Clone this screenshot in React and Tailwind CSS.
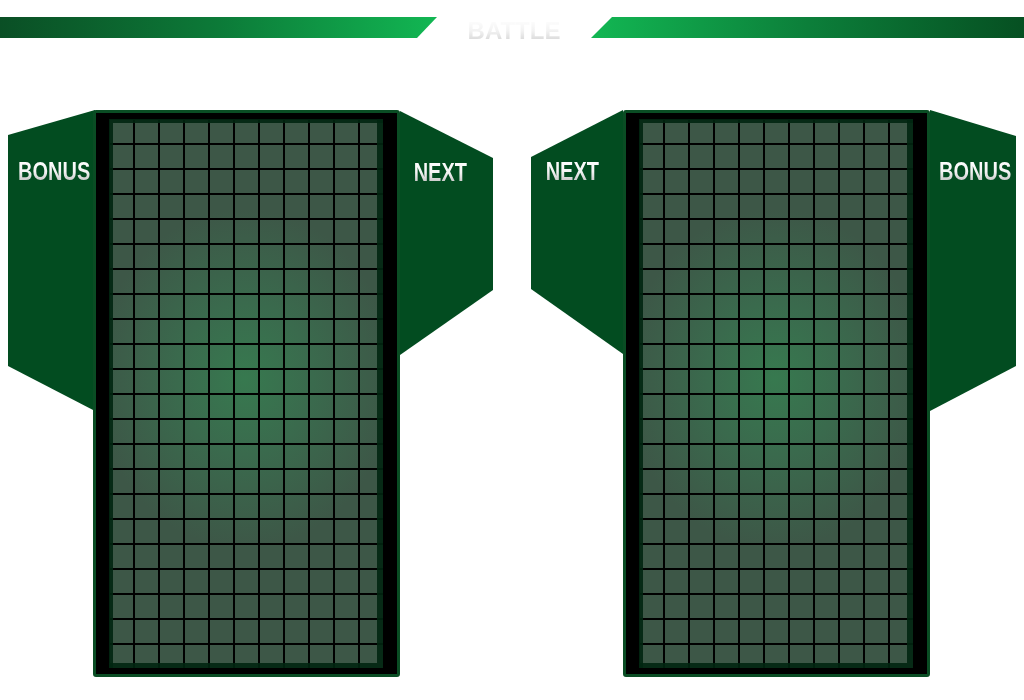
import React from 'react';

const COLS = 11;
const ROWS = 22;

function PanelLabel({ text, className }) {
  return (
    <div className={`flex justify-center pt-[49px] ${className}`}>
      <span className="block scale-x-[0.8] text-[25px] leading-none font-bold bg-linear-to-b from-white via-[#f4f4f4] to-[#bcbcbc] bg-clip-text text-transparent">
        {text}
      </span>
    </div>
  );
}

function Board({ className = '' }) {
  const cells = Array.from({ length: COLS * ROWS });

  return (
    <div className={`relative z-10 w-[307px] h-[567px] border-[3px] border-[#0a4d24] rounded-[3px] bg-black pl-[14px] pt-[7px] ${className}`}>
      <div className="relative grid grid-cols-[repeat(11,25px)] w-[275px] h-[550px] bg-[radial-gradient(ellipse_150px_170px_at_49%_47%,#37794f_0%,#3a6a4d_45%,#3d5747_100%)]">
        {cells.map((_, i) => (
          <div key={i} className="w-[25px] h-[25px] border-r-2 border-b-2 border-black" />
        ))}
        {/* dark inner rim of the well */}
        <div className="pointer-events-none absolute left-[-1px] top-[-1px] w-[274px] h-[549px] shadow-[inset_4px_4px_0_rgba(1,38,17,0.9),inset_-6px_-5px_0_rgba(1,38,17,0.9)]" />
      </div>
    </div>
  );
}

function App() {
  return (
    <div className="w-[1024px] h-[700px] bg-white overflow-hidden font-['Liberation_Sans',Arial,sans-serif]">
      {/* Title bar */}
      <div className="flex items-center h-[21px] mt-[17px]">
        <div className="w-[437px] h-full bg-linear-to-r from-[#0a4f25] via-[#0c7a38] to-[#12b753] [clip-path:polygon(0_0,100%_0,calc(100%-20px)_100%,0_100%)]" />
        <div className="w-[154px] flex justify-center mt-[6px]">
          <span className="text-[24px] leading-none font-bold bg-linear-to-b from-white via-[#f2f2f2] to-[#d2d2d2] bg-clip-text text-transparent">
            BATTLE
          </span>
        </div>
        <div className="w-[433px] h-full bg-linear-to-r from-[#12b753] via-[#0c7f3a] to-[#065022] [clip-path:polygon(21px_0,100%_0,100%_100%,0_100%)]" />
      </div>

      {/* Players */}
      <div className="flex items-start mt-[72px] pl-[8px]">
        {/* Player 1 */}
        <div className="w-[87px] h-[301px] bg-[#024c20] [clip-path:polygon(0_25px,100%_0,100%_100%,0_256px)]">
          <PanelLabel text="BONUS" className="pl-[6px]" />
        </div>
        <Board className="-ml-[2px]" />
        <div className="w-[93px] h-[244px] mt-[1px] bg-[#024c20] [clip-path:polygon(0_0,100%_47px,100%_179px,0_100%)]">
          <PanelLabel text="NEXT" className="pr-[12px] pt-[48px]" />
        </div>

        {/* Player 2 */}
        <div className="w-[92px] h-[244px] ml-[38px] bg-[#024c20] [clip-path:polygon(0_47px,100%_0,100%_100%,0_179px)]">
          <PanelLabel text="NEXT" className="pr-[10px]" />
        </div>
        <Board />
        <div className="w-[86px] h-[301px] bg-[#024c20] [clip-path:polygon(0_0,100%_26px,100%_256px,0_100%)]">
          <PanelLabel text="BONUS" className="pl-[4px]" />
        </div>
      </div>
    </div>
  );
}

export default App;
